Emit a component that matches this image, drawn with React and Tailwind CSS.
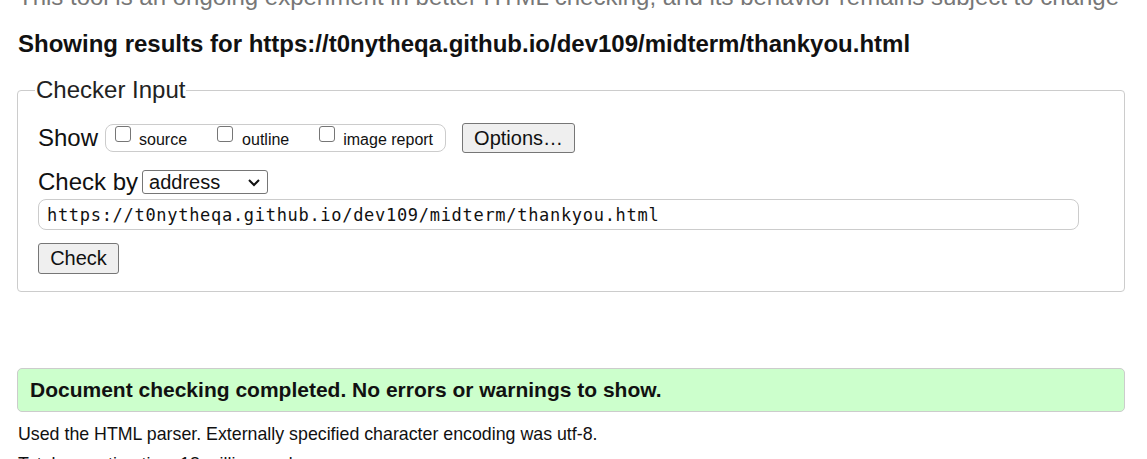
import { useState } from "react";

function Box({ checked, onChange }) {
  return (
    <span
      onClick={onChange}
      className={
        "block w-[16px] h-[16px] rounded-[3px] border shrink-0 " +
        (checked ? "bg-[#0075ff] border-[#0075ff]" : "bg-white border-[#767676]")
      }
    />
  );
}

function Option({ label, checked, onChange, gap, first }) {
  return (
    <label className={"flex items-start " + (first ? "" : "ml-[30px]")}>
      <span className="mt-[1px]">
        <Box checked={checked} onChange={onChange} />
      </span>
      <span className={"mt-[5px] leading-[20px] " + gap}>{label}</span>
    </label>
  );
}

export default function App() {
  const [show, setShow] = useState({ source: false, outline: false, image: false });
  const [url, setUrl] = useState("https://t0nytheqa.github.io/dev109/midterm/thankyou.html");

  const toggle = (k) => setShow({ ...show, [k]: !show[k] });

  return (
    <div className="w-[1147px] h-[459px] overflow-hidden bg-white text-[#111] font-['Liberation_Sans',Arial,sans-serif]">
      <p className="mt-[-17px] ml-[18px] text-[24px] leading-[28px] text-[#777] whitespace-nowrap">
        This tool is an ongoing experiment in better HTML checking, and its behavior remains subject to change
      </p>

      <h2 className="mt-[19px] ml-[18px] text-[24px] leading-[28px] font-bold whitespace-nowrap">
        Showing results for https://t0nytheqa.github.io/dev109/midterm/thankyou.html
      </h2>

      <fieldset className="mt-[18px] ml-[17px] w-[1108px] border border-[#ccc] rounded-[4px] pl-[20px] pb-[17px]">
        <legend className="-ml-[3px] px-[1px] text-[24px] leading-[28px] text-[#222]">Checker Input</legend>

        <div className="mt-[19px] flex items-center h-[30px]">
          <span className="text-[24px] leading-[28px] mr-[7px]">Show</span>
          <div className="flex items-start h-[28px] w-[341px] border border-[#ccc] rounded-[8px] pl-[9px] text-[16px]">
            <Option first label="source" gap="ml-[8px]" checked={show.source} onChange={() => toggle("source")} />
            <Option label="outline" gap="ml-[9px]" checked={show.outline} onChange={() => toggle("outline")} />
            <Option label="image report" gap="ml-[8px]" checked={show.image} onChange={() => toggle("image")} />
          </div>
          <button className="ml-[16px] h-[30px] w-[113px] bg-[#efefef] border border-[#767676] rounded-[3px] text-[20px] leading-[23px]">
            Options…
          </button>
        </div>

        <div className="mt-[17px] flex items-center h-[24px]">
          <span className="text-[24px] leading-[28px] mr-[4px]">Check by</span>
          <div className="flex items-center justify-between h-[24px] w-[126px] border border-[#767676] rounded-[3px] pl-[6px] pr-[6px] text-[20px] leading-[22px]">
            <span>address</span>
            <svg width="14" height="10" viewBox="0 0 14 10" fill="none" stroke="#111" strokeWidth="2">
              <path d="M2 3 L7 8 L12 3" />
            </svg>
          </div>
        </div>

        <input
          value={url}
          onChange={(e) => setUrl(e.target.value)}
          className="mt-[5px] block w-[1041px] h-[31px] border border-[#ccc] rounded-[8px] pl-[8px] text-[17px] tracking-[0.7px] font-['DejaVu_Sans_Mono',monospace] outline-none"
        />

        <button className="mt-[13px] block h-[31px] w-[81px] bg-[#efefef] border border-[#767676] rounded-[3px] text-[20px] leading-[23px]">
          Check
        </button>
      </fieldset>

      <div className="mt-[76px] ml-[17px] w-[1108px] h-[44px] flex items-center bg-[#ccffcc] border border-[#ccc] rounded-[5px] pl-[12px]">
        <p className="text-[21px] font-bold">Document checking completed. No errors or warnings to show.</p>
      </div>

      <p className="mt-[12px] ml-[18px] text-[17.8px] leading-[21px]">
        Used the HTML parser. Externally specified character encoding was utf-8.
      </p>
      <p className="mt-[9px] ml-[18px] text-[17.8px] leading-[21px]">Total execution time 18 milliseconds.</p>
    </div>
  );
}
